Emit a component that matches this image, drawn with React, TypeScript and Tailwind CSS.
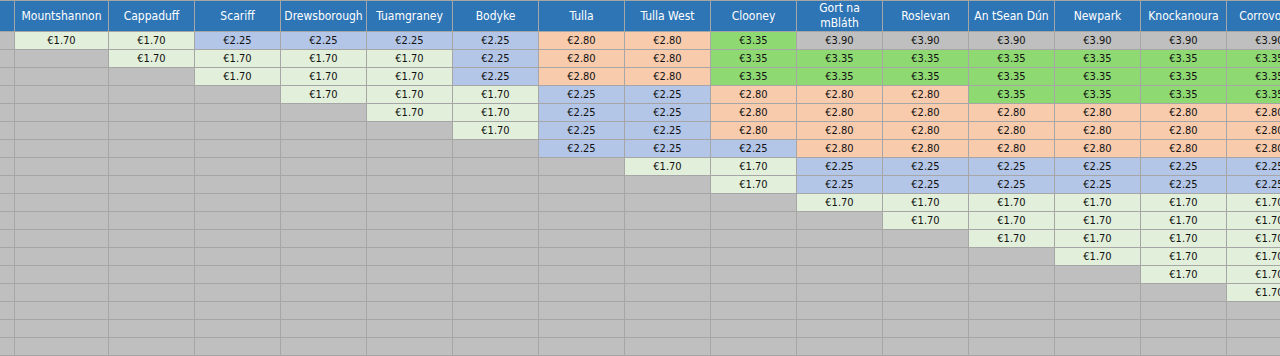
const stops = [
  "Mountshannon",
  "Cappaduff",
  "Scariff",
  "Drewsborough",
  "Tuamgraney",
  "Bodyke",
  "Tulla",
  "Tulla West",
  "Clooney",
  "Gort na mBláth",
  "Roslevan",
  "An tSean Dún",
  "Newpark",
  "Knockanoura",
  "Corrovorrin",
];

// fares per column, top row first
const fares: string[][] = [
  ["1.70"],
  ["1.70", "1.70"],
  ["2.25", "1.70", "1.70"],
  ["2.25", "1.70", "1.70", "1.70"],
  ["2.25", "1.70", "1.70", "1.70", "1.70"],
  ["2.25", "2.25", "2.25", "1.70", "1.70", "1.70"],
  ["2.80", "2.80", "2.80", "2.25", "2.25", "2.25", "2.25"],
  ["2.80", "2.80", "2.80", "2.25", "2.25", "2.25", "2.25", "1.70"],
  ["3.35", "3.35", "3.35", "2.80", "2.80", "2.80", "2.25", "1.70", "1.70"],
  ["3.90", "3.35", "3.35", "2.80", "2.80", "2.80", "2.80", "2.25", "2.25", "1.70"],
  ["3.90", "3.35", "3.35", "2.80", "2.80", "2.80", "2.80", "2.25", "2.25", "1.70", "1.70"],
  ["3.90", "3.35", "3.35", "3.35", "2.80", "2.80", "2.80", "2.25", "2.25", "1.70", "1.70", "1.70"],
  ["3.90", "3.35", "3.35", "3.35", "2.80", "2.80", "2.80", "2.25", "2.25", "1.70", "1.70", "1.70", "1.70"],
  ["3.90", "3.35", "3.35", "3.35", "2.80", "2.80", "2.80", "2.25", "2.25", "1.70", "1.70", "1.70", "1.70", "1.70"],
  ["3.90", "3.35", "3.35", "3.35", "2.80", "2.80", "2.80", "2.25", "2.25", "1.70", "1.70", "1.70", "1.70", "1.70", "1.70"],
];

const fareColor: Record<string, string> = {
  "1.70": "bg-[#e2efda]",
  "2.25": "bg-[#b4c6e7]",
  "2.80": "bg-[#f8cbad]",
  "3.35": "bg-[#8fd973]",
  "3.90": "bg-[#bfbfbf]",
};

const ROWS = 19;

export default function App() {
  const font = { fontFamily: '"DejaVu Sans Condensed", "DejaVu Sans", sans-serif', fontStretch: "condensed" };

  return (
    <div className="h-[356px] w-full overflow-hidden bg-[#a6a6a6]" style={font}>
      <div className="grid w-max grid-cols-[14px_93px_repeat(14,85px)] grid-rows-[30px_repeat(19,17px)] gap-px pt-px">
        <div className="bg-[#2e75b6]" />
        {stops.map((s) => (
          <div
            key={s}
            className="flex items-center justify-center bg-[#2e75b6] px-1 text-center text-[12px] leading-[15px] text-white"
          >
            {s}
          </div>
        ))}

        {Array.from({ length: ROWS }).map((_, r) => (
          <Row key={r} r={r} />
        ))}
      </div>
    </div>
  );
}

function Row({ r }: { r: number }) {
  return (
    <>
      <div className="bg-[#bfbfbf]" />
      {fares.map((col, c) => {
        const v = col[r];
        return (
          <div
            key={c}
            className={`flex items-center justify-center text-[11px] leading-none text-[#111] ${v ? fareColor[v] : "bg-[#bfbfbf]"}`}
          >
            {v ? `€${v}` : ""}
          </div>
        );
      })}
    </>
  );
}
